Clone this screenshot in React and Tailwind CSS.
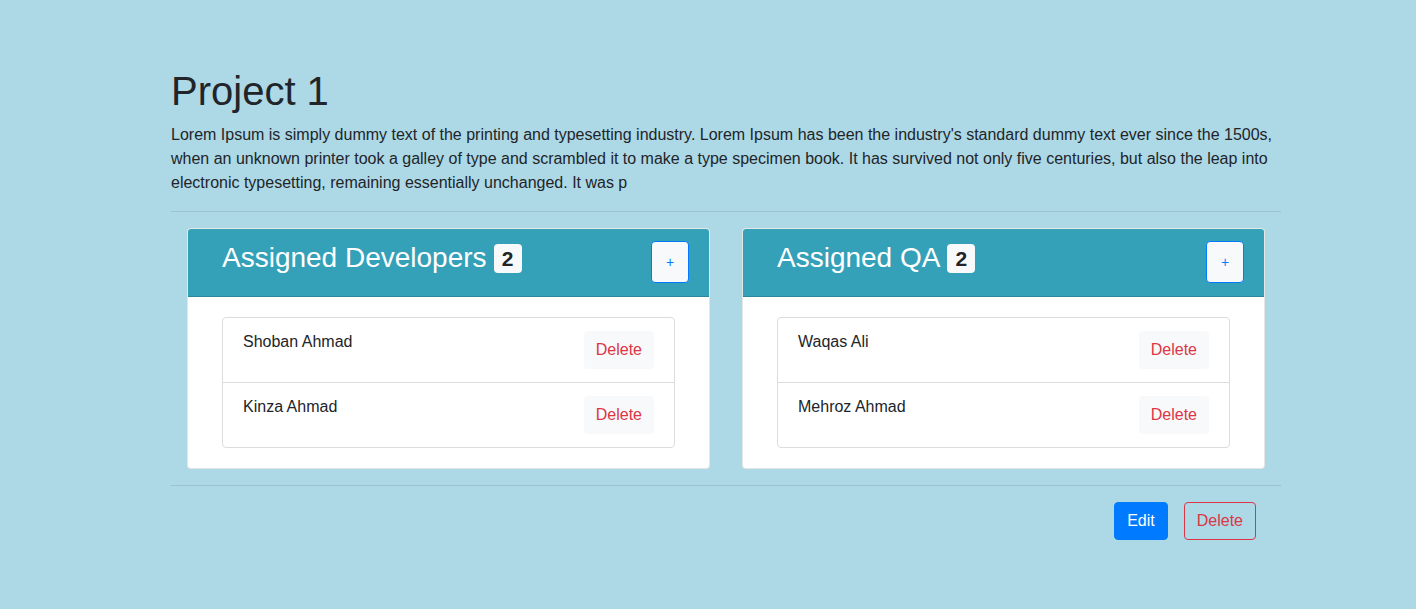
import React from 'react'

const font = { fontFamily: '"Liberation Sans", Arial, sans-serif' }

function MemberCard({ title, count, members }) {
  return (
    <div className="w-[523px] bg-white border border-black/10 rounded-[4px] overflow-hidden">
      {/* header */}
      <div className="flex items-center justify-between bg-[#34a1b9] border-b border-black/15 px-5 pt-3 pb-[13px]">
        <h3 className="flex items-center pl-[14px] mb-2 text-[28px] leading-[1.2] text-white">
          {title}
          <span className="ml-[7px] flex items-center justify-center w-[28px] h-[29px] rounded-[4px] bg-[#f8f9fa] text-[#212529] text-[21px] font-bold leading-none">
            {count}
          </span>
        </h3>
        <button className="w-[38px] h-[42px] rounded-[4px] border border-[#007bff] bg-[#f8f9fa] text-[#007bff] text-[14px] leading-none">
          +
        </button>
      </div>

      {/* body */}
      <div className="px-[34px] pt-5 pb-5">
        <ul className="border border-[#dcdcdc] rounded-[4px]">
          {members.map((m, i) => (
            <li
              key={m}
              className={`flex items-start justify-between pl-5 pr-5 pt-3 pb-[13px] ${
                i > 0 ? 'border-t border-[#dcdcdc]' : ''
              }`}
            >
              <span className="text-[16px] leading-6 text-[#212529]">{m}</span>
              <button className="h-[38px] px-3 rounded-[4px] bg-[#f8f9fa] text-[#dc3545] text-[16px] leading-6 mt-px">
                Delete
              </button>
            </li>
          ))}
        </ul>
      </div>
    </div>
  )
}

export default function App() {
  return (
    <div className="min-h-[609px] bg-[#add8e6] text-[#212529]" style={font}>
      <div className="w-[1110px] ml-[171px] pt-[67px]">
        <h1 className="text-[40px] leading-[1.2] mb-2">Project 1</h1>
        <p className="text-[16px] leading-6 mb-4">
          Lorem Ipsum is simply dummy text of the printing and typesetting industry. Lorem Ipsum has been the
          industry's standard dummy text ever since the 1500s, when an unknown printer took a galley of type and
          scrambled it to make a type specimen book. It has survived not only five centuries, but also the leap
          into electronic typesetting, remaining essentially unchanged. It was p
        </p>
        <hr className="border-t border-black/10 mb-4" />

        <div className="flex justify-between px-4">
          <MemberCard title="Assigned Developers" count={2} members={['Shoban Ahmad', 'Kinza Ahmad']} />
          <MemberCard title="Assigned QA" count={2} members={['Waqas Ali', 'Mehroz Ahmad']} />
        </div>

        <hr className="border-t border-black/10 mt-4 mb-4" />

        <div className="flex justify-end gap-4 pr-[25px]">
          <button className="h-[38px] px-3 rounded-[4px] bg-[#007bff] border border-[#007bff] text-white text-[16px]">
            Edit
          </button>
          <button className="h-[38px] px-3 rounded-[4px] border border-[#dc3545] text-[#dc3545] text-[16px]">
            Delete
          </button>
        </div>
      </div>
    </div>
  )
}
